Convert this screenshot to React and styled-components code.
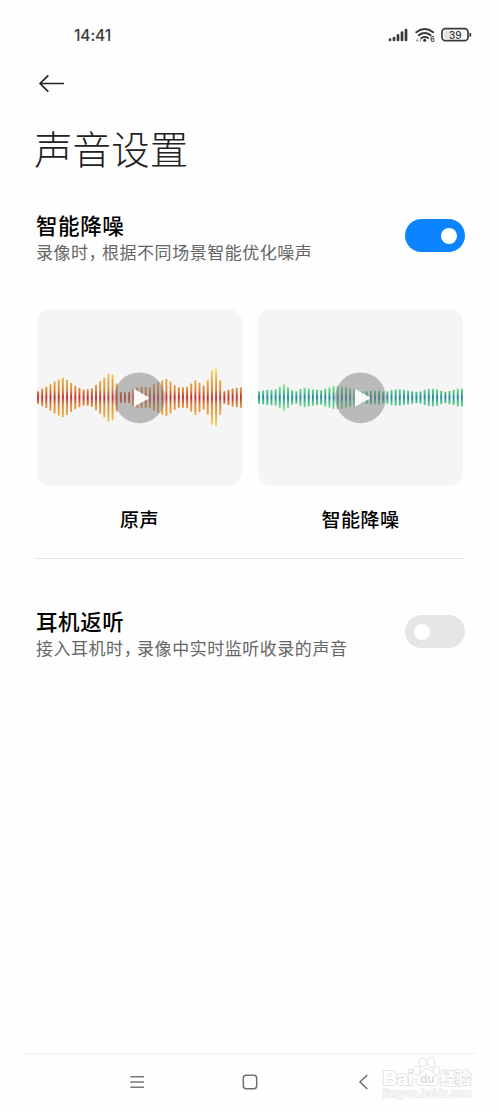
import React from 'react';
import styled, { createGlobalStyle } from 'styled-components';

const GlobalStyle = createGlobalStyle`
  * { box-sizing: border-box; }
  body {
    margin: 0;
    background: #fefefe;
    font-family: "Noto Sans CJK SC", sans-serif;
    color: #000;
  }
`;

const Screen = styled.div`
  width: 500px;
  height: 1111px;
  display: flex;
  flex-direction: column;
  overflow: hidden;
`;

const StatusBar = styled.header`
  height: 70px;
  padding: 0 28px 0 74px;
  display: flex;
  align-items: center;
  justify-content: space-between;
`;

const Clock = styled.time`
  padding-top: 2px;
  font: 500 15.5px/20px Inter, sans-serif;
  letter-spacing: -0.1px;
  color: #3a3a3a;
`;

const StatusIcons = styled.div`
  display: flex;
  svg { display: block; }
`;

const TopBar = styled.nav`
  height: 28px;
  padding-left: 38px;
  display: flex;
  align-items: center;
  svg { display: block; }
`;

const Title = styled.h1`
  margin: 21px 0 0 34px;
  font-size: 38.5px;
  line-height: 56px;
  font-weight: 300;
  letter-spacing: 0.1px;
  color: #222;
`;

const Setting = styled.section`
  margin: ${p => p.$top}px 35px 0 36px;
  height: 57px;
  display: flex;
  justify-content: space-between;
`;

const SettingName = styled.h2`
  margin: 0;
  font-size: 21.5px;
  line-height: 30px;
  font-weight: 500;
  letter-spacing: 0.6px;
`;

const SettingNote = styled.p`
  margin: 0;
  font-size: 17px;
  line-height: 23px;
  letter-spacing: 0.53px;
  color: #666;
`;

const Comma = styled.span`
  font-feature-settings: "halt";
  margin-right: 4.4px;
`;

const Toggle = styled.span`
  width: 60px;
  height: 33px;
  margin-top: 9px;
  padding: 0 ${p => (p.$on ? 8 : 9)}px;
  border-radius: 17px;
  background: ${p => (p.$on ? '#0d84ff' : '#e6e6e6')};
  display: flex;
  align-items: center;
  justify-content: ${p => (p.$on ? 'flex-end' : 'flex-start')};
`;

const Knob = styled.span`
  width: 16px;
  height: 16px;
  border-radius: 50%;
  background: #fff;
`;

const Samples = styled.div`
  margin: 42px 37px 0;
  display: flex;
  gap: 16px;
`;

const Sample = styled.figure`
  margin: 0;
  width: 205px;
`;

const Preview = styled.div`
  height: 177px;
  border-radius: 14px;
  background: #f5f5f5;
  overflow: hidden;
  svg { display: block; }
`;

const Caption = styled.figcaption`
  margin-top: 19px;
  line-height: 28px;
  text-align: center;
  font-size: 19px;
  font-weight: 500;
  letter-spacing: 0.5px;
`;

const Divider = styled.hr`
  width: 430px;
  height: 1px;
  margin: 25px 0 0 35px;
  border: 0;
  background: #e4e4e4;
`;

const SystemNav = styled.footer`
  margin: auto 24px 0;
  height: 58px;
  border-top: 1px solid #efefef;
  position: relative;
  display: flex;
  align-items: center;
  padding: 0 0 2px 105px;
  gap: 97px;
  svg { display: block; }
`;

const Watermark = styled.div`
  position: absolute;
  left: 356px;
  top: 0;
`;

const ORIGINAL = [38, 52, 64, 80, 96, 108, 118, 106, 88, 70, 58, 48, 50, 56, 76, 98, 118, 144, 138, 84, 34, 32, 34, 50, 62, 66, 64, 62, 80, 92, 104, 112, 96, 74, 62, 62, 64, 84, 104, 88, 72, 104, 164, 174, 104, 38, 46, 54, 58, 62];
const REDUCED = [38, 42, 46, 46, 50, 64, 80, 64, 44, 38, 52, 58, 54, 50, 46, 44, 54, 62, 70, 70, 68, 62, 56, 54, 36, 36, 38, 42, 40, 42, 36, 38, 46, 50, 50, 46, 42, 38, 34, 38, 46, 52, 54, 50, 40, 34, 40, 46, 54, 56];

const WARM = ['#f8dc62', '#eda93c', '#dc8436', '#c92a2a'];
const COOL = ['#a0ea7e', '#68d48a', '#38b592', '#23809a'];

function Wave({ id, levels, colors }) {
  const [tip, outer, mid, core] = colors;
  const reach = id === 'warm' ? 29 : 14;
  return (
    <svg width="205" height="177" viewBox="0 0 205 177">
      <defs>
        <linearGradient id={id} gradientUnits="userSpaceOnUse" x1="0" x2="0" y1={88.5 - reach} y2={88.5 + reach}>
          <stop offset="0" stopColor={tip} />
          <stop offset=".2" stopColor={outer} />
          <stop offset=".38" stopColor={mid} />
          <stop offset=".5" stopColor={core} />
          <stop offset=".62" stopColor={mid} />
          <stop offset=".8" stopColor={outer} />
          <stop offset="1" stopColor={tip} />
        </linearGradient>
      </defs>
      {levels.map((v, i) => (
        <rect key={i} x={0.1 + i * 4.14} y={88.5 - v / 6} width="1.9" height={v / 3} rx=".6" fill={`url(#${id})`} />
      ))}
      <circle cx="102.5" cy="88.8" r="25.4" fill="#777" fillOpacity=".47" />
      <path d="M96.800 80.800v16q0 1 1 .5l13.800-7.600q1-.8 0-1.500L97.800 80.300q-1-.4-1 .5z" fill="#fff" fillOpacity=".95" />
    </svg>
  );
}

function Switch({ on }) {
  return <Toggle $on={on} role="switch" aria-checked={on}><Knob /></Toggle>;
}

export default function App() {
  return (
    <Screen>
      <GlobalStyle />
      <StatusBar>
        <Clock>14:41</Clock>
        <StatusIcons>
          <svg width="84" height="18" viewBox="0 0 84 18" fill="none" stroke="#3a3a3a" strokeLinecap="round">
            <path d="M2 13.900v-.4M6 13.900v-1.900M10 13.900v-4.500M14 13.900V6.700M18 13.900V4" strokeWidth="2.7" />
            <path d="M28.300 6.200q8.400-6.500 16.800 0M30.900 9.100q5.800-4.300 11.600 0M33.400 12q3.300-2.200 6.600 0" strokeWidth="2" />
            <circle cx="36.700" cy="14.200" r="1.500" fill="#333" stroke="none" />
            <path d="M29.800 12.700l-1.800 2.100h2.500M32.600 12.700v2.700" stroke="#777" strokeWidth=".8" />
            <text x="42.200" y="15.800" fill="#333" stroke="none" fontFamily="Inter, sans-serif" fontSize="7" fontWeight="600">6</text>
            <rect x="54" y="2.700" width="26" height="12" rx="3.500" strokeWidth="1.7" />
            <rect x="56" y="4.700" width="8.500" height="8" rx="1" fill="#e3e3e3" stroke="none" />
            <path d="M82.300 7.500v2.400" strokeWidth="1.700" />
            <text x="67.300" y="12.500" textAnchor="middle" fill="#333" stroke="none" fontFamily="Inter, sans-serif" fontSize="10" fontWeight="500">39</text>
          </svg>
        </StatusIcons>
      </StatusBar>
      <TopBar>
        <svg width="28" height="20" viewBox="0 0 28 20" fill="none" stroke="#222" strokeWidth="1.700" strokeLinecap="round" strokeLinejoin="round">
          <path d="M25.300 9.500H2M9.800 1.900L2 9.500l7.800 7.700" />
        </svg>
      </TopBar>
      <Title>声音设置</Title>
      <Setting $top={35}>
        <div>
          <SettingName>智能降噪</SettingName>
          <SettingNote>录像时<Comma>，</Comma>根据不同场景智能优化噪声</SettingNote>
        </div>
        <Switch on />
      </Setting>
      <Samples>
        <Sample>
          <Preview><Wave id="warm" levels={ORIGINAL} colors={WARM} /></Preview>
          <Caption>原声</Caption>
        </Sample>
        <Sample>
          <Preview><Wave id="cool" levels={REDUCED} colors={COOL} /></Preview>
          <Caption>智能降噪</Caption>
        </Sample>
      </Samples>
      <Divider />
      <Setting $top={47}>
        <div>
          <SettingName>耳机返听</SettingName>
          <SettingNote>接入耳机时<Comma>，</Comma>录像中实时监听收录的声音</SettingNote>
        </div>
        <Switch on={false} />
      </Setting>
      <SystemNav>
        <svg width="16" height="16" viewBox="0 0 16 16" stroke="#777" strokeWidth="1.500">
          <path d="M1.300 2.700h13.700M1.300 8h13.700M1.300 13.300h13.700" />
        </svg>
        <svg width="16" height="16" viewBox="0 0 16 16" fill="none" stroke="#707070" strokeWidth="1.500">
          <rect x="1.300" y="1.300" width="13.400" height="13.400" rx="3" />
        </svg>
        <svg width="16" height="16" viewBox="0 0 16 16" fill="none" stroke="#707070" strokeWidth="1.500">
          <path d="M12.300 1L5 8l7.300 7" />
        </svg>
        <Watermark>
          <svg width="96" height="52" viewBox="0 0 96 52" fill="#fff" stroke="#e2e2e2" strokeWidth="1">
            <g fontFamily="'Liberation Sans', sans-serif" fontWeight="700" paintOrder="stroke" strokeWidth="1.800">
              <text x="2.500" y="31" fontSize="20.500" textLength="31">Bai</text>
              <text x="60" y="30" fontSize="15.500" fontFamily="'Noto Sans CJK SC', sans-serif">经验</text>
            </g>
            <ellipse cx="37" cy="16.500" rx="3.200" ry="4.300" />
            <ellipse cx="42.500" cy="8.500" rx="3.400" ry="4.700" />
            <ellipse cx="51" cy="8.500" rx="3.400" ry="4.700" />
            <ellipse cx="56.500" cy="16.500" rx="3.200" ry="4.300" />
            <path d="M47 14.500c3.500 0 5 3.500 7.500 6 3.500 3.500 4.500 6 3 8.800s-4.500 2.700-10.500 2.200-8.500.5-10.200-1.800c-2-3-.6-5.900 2.200-8.500 2.700-2.600 4.500-6.700 8-6.700z" />
            <text x="40" y="29" fontSize="12" fontWeight="700" fontFamily="'Liberation Sans', sans-serif" fill="#dcdcdc" stroke="none">du</text>
            <text x="3" y="43" fontSize="10" fontFamily="'Liberation Sans', sans-serif" fill="#fff" stroke="#e6e6e6" strokeWidth="1.400" paintOrder="stroke" textLength="88">jingyan.baidu.com</text>
          </svg>
        </Watermark>
      </SystemNav>
    </Screen>
  );
}
